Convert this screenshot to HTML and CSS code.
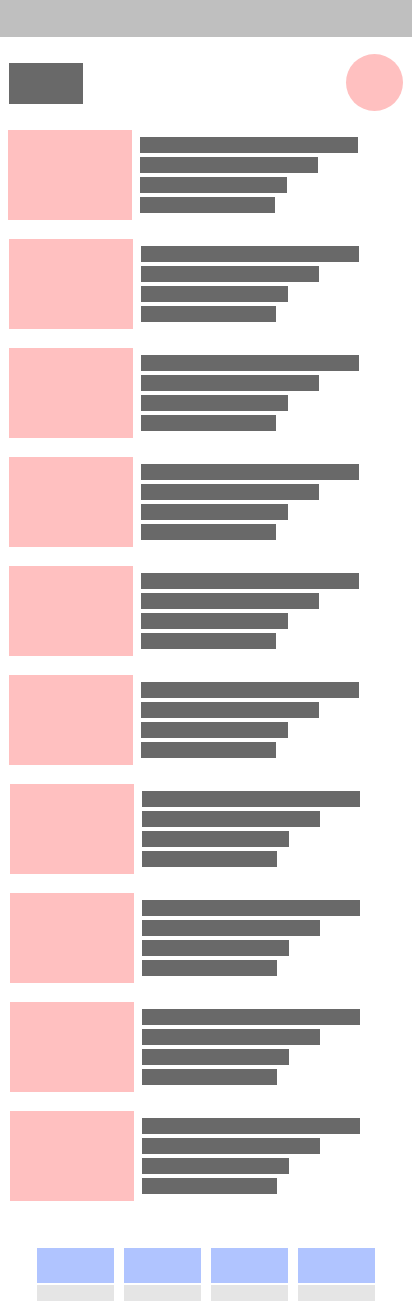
FILE: index.html
```html
<!DOCTYPE html>
<html>
<head>
<meta charset="utf-8">
<link rel="stylesheet" href="styles.css">
</head>
<body>
<div class="topbar"></div>
<div class="header">
  <div class="logo"></div>
  <div class="avatar"></div>
</div>
<div class="list">
  <div class="row"><div class="thumb"></div><div class="lines"><div class="l l1"></div><div class="l l2"></div><div class="l l3"></div><div class="l l4"></div></div></div>
  <div class="row"><div class="thumb"></div><div class="lines"><div class="l l1"></div><div class="l l2"></div><div class="l l3"></div><div class="l l4"></div></div></div>
  <div class="row"><div class="thumb"></div><div class="lines"><div class="l l1"></div><div class="l l2"></div><div class="l l3"></div><div class="l l4"></div></div></div>
  <div class="row"><div class="thumb"></div><div class="lines"><div class="l l1"></div><div class="l l2"></div><div class="l l3"></div><div class="l l4"></div></div></div>
  <div class="row"><div class="thumb"></div><div class="lines"><div class="l l1"></div><div class="l l2"></div><div class="l l3"></div><div class="l l4"></div></div></div>
  <div class="row"><div class="thumb"></div><div class="lines"><div class="l l1"></div><div class="l l2"></div><div class="l l3"></div><div class="l l4"></div></div></div>
  <div class="row"><div class="thumb"></div><div class="lines"><div class="l l1"></div><div class="l l2"></div><div class="l l3"></div><div class="l l4"></div></div></div>
  <div class="row"><div class="thumb"></div><div class="lines"><div class="l l1"></div><div class="l l2"></div><div class="l l3"></div><div class="l l4"></div></div></div>
  <div class="row"><div class="thumb"></div><div class="lines"><div class="l l1"></div><div class="l l2"></div><div class="l l3"></div><div class="l l4"></div></div></div>
  <div class="row"><div class="thumb"></div><div class="lines"><div class="l l1"></div><div class="l l2"></div><div class="l l3"></div><div class="l l4"></div></div></div>
</div>
<div class="tabs">
  <div class="tab"><div class="tab-top"></div><div class="tab-bottom"></div></div>
  <div class="tab"><div class="tab-top"></div><div class="tab-bottom"></div></div>
  <div class="tab"><div class="tab-top"></div><div class="tab-bottom"></div></div>
  <div class="tab"><div class="tab-top"></div><div class="tab-bottom"></div></div>
</div>
</body>
</html>
```
FILE: styles.css
```css
html, body {
  margin: 0;
  padding: 0;
  background: #ffffff;
}
body {
  width: 412px;
  height: 1303px;
  overflow: hidden;
}
.topbar {
  height: 37px;
  background: #bfbfbf;
}
.header {
  display: flex;
  justify-content: space-between;
  align-items: center;
  padding: 17px 9px 0 9px;
}
.logo {
  width: 74px;
  height: 41px;
  background: #696969;
  margin-top: 2px;
}
.avatar {
  width: 57px;
  height: 57px;
  border-radius: 50%;
  background: #ffc0c0;
}
.list {
  display: flex;
  flex-direction: column;
  gap: 19px;
  padding: 19px 0 0 8px;
}
.row {
  display: flex;
  gap: 8px;
}
.row:nth-child(n+2) { margin-left: 1px; }
.row:nth-child(n+7) { margin-left: 2px; }
.thumb {
  width: 124px;
  height: 90px;
  background: #ffc0c0;
}
.lines {
  display: flex;
  flex-direction: column;
  gap: 4px;
  padding-top: 7px;
}
.l {
  height: 16px;
  background: #696969;
}
.l1 { width: 218px; }
.l2 { width: 178px; }
.l3 { width: 147px; }
.l4 { width: 135px; }
.tabs {
  display: flex;
  justify-content: center;
  gap: 10px;
  margin-top: 47px;
}
.tab {
  width: 77px;
  display: flex;
  flex-direction: column;
  gap: 2px;
}
.tab-top {
  height: 35px;
  background: #b0c4ff;
}
.tab-bottom {
  height: 16px;
  background: #e5e5e5;
}
```
